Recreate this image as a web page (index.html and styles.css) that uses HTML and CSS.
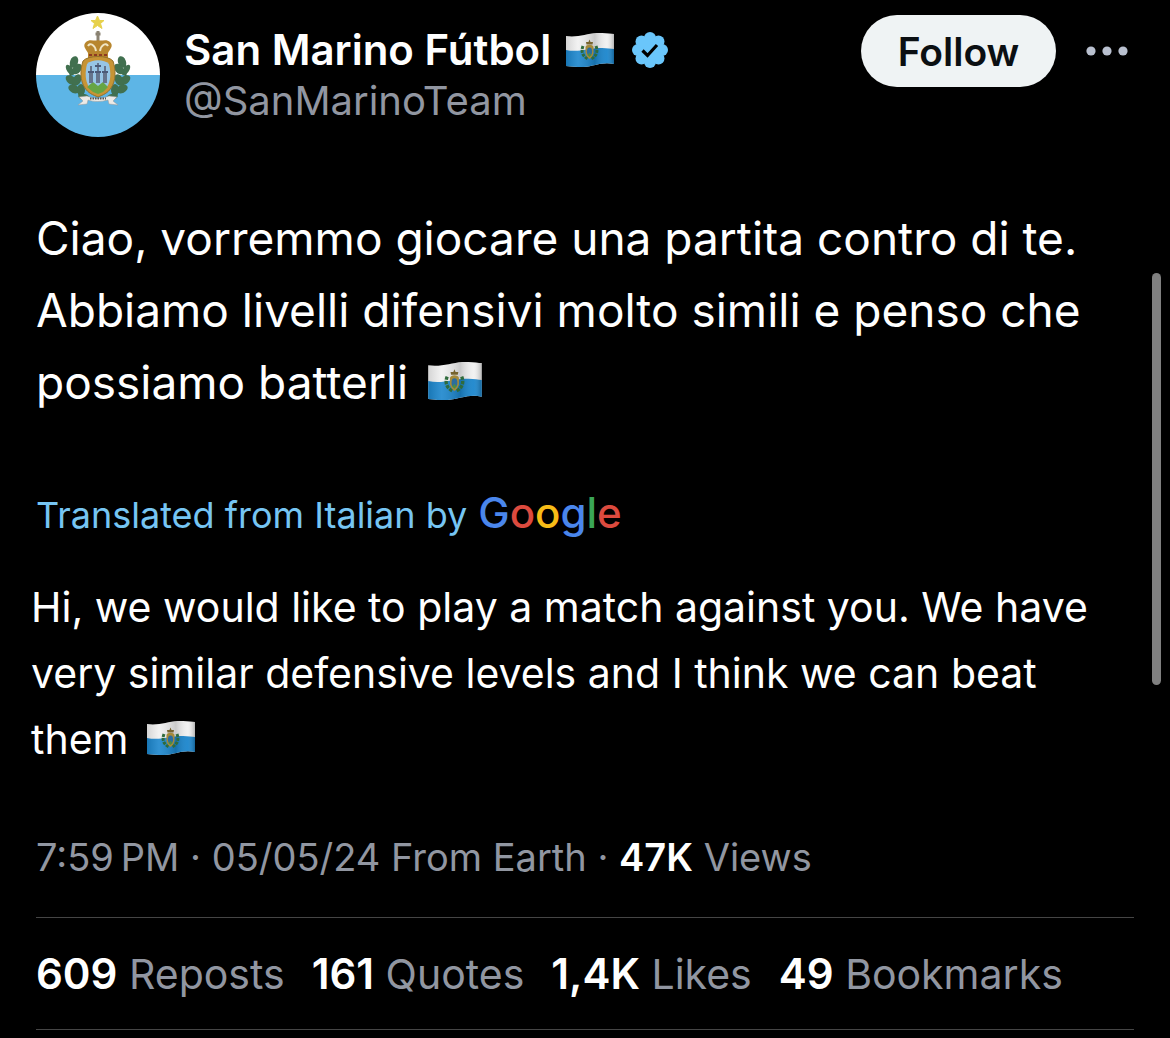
FILE: index.html
```html
<!DOCTYPE html>
<html lang="en">
<head>
    <meta charset="UTF-8">
    <meta name="viewport" content="width=device-width, initial-scale=1.0">
    <title>San Marino Fútbol</title>
    <link rel="stylesheet" href="styles.css">
</head>
<body>
    <!-- shared flag, used in the name and in both texts -->
    <svg class="defs" width="0" height="0" aria-hidden="true">
        <defs>
            <linearGradient id="wave" x1="0" x2="1" y1="0" y2="0">
                <stop offset="0" stop-color="#000" stop-opacity=".12"/>
                <stop offset=".25" stop-color="#fff" stop-opacity=".1"/>
                <stop offset=".6" stop-color="#000" stop-opacity=".16"/>
                <stop offset=".85" stop-color="#fff" stop-opacity=".05"/>
                <stop offset="1" stop-color="#000" stop-opacity=".25"/>
            </linearGradient>
            <symbol id="flag" viewBox="0 0 48 34">
                <path d="M0 3 C14 5 24 -1 36 0 C41 0 45 1 48 1 V31 C34 28 26 35 12 34 C7 34 3 33 0 33Z" fill="#f1f1f1"/>
                <path d="M0 17 C14 20 24 14 36 15 C41 15 45 16 48 16 V31 C34 28 26 35 12 34 C7 34 3 33 0 33Z" fill="#1b86cd"/>
                <path d="M0 3 C14 5 24 -1 36 0 C41 0 45 1 48 1 V31 C34 28 26 35 12 34 C7 34 3 33 0 33Z" fill="url(#wave)"/>
                <path d="M17 13 C15 18 16 23 22 26 M30 13 C32 18 31 23 25 26" fill="none" stroke="#2f6b3c" stroke-width="3" stroke-dasharray="3 1"/>
                <path d="M19.500 14 C20 11 27 11 27.500 14 V20 C27 23 25 25 23.500 26 C22 25 20 23 19.500 20Z" fill="#a58a3a"/>
                <ellipse cx="23.500" cy="18.500" rx="2.600" ry="4" fill="#2c6d9e"/>
                <path d="M21.500 22 L23.500 19.500 L25.500 22 L23.500 24Z" fill="#4c8b45"/>
                <path d="M20.500 11.500 L20 9 L22.500 9 L23.500 6.500 L24.500 9 L27 9 L26.500 11.500Z" fill="#77642f"/>
            </symbol>
        </defs>
    </svg>

    <article class="post">
        <header class="header">
            <svg class="avatar" viewBox="0 0 124 124" role="img" aria-label="San Marino">
                <defs>
                    <clipPath id="circle"><circle cx="62" cy="62" r="62"/></clipPath>
                </defs>
                <g clip-path="url(#circle)">
                    <rect width="124" height="62" fill="#fff"/>
                    <rect y="62" width="124" height="62" fill="#5db5e6"/>
                </g>
                <path d="M61.500 3 L63.500 7.500 L68 7.500 L64.500 10.500 L66 15.500 L61.500 12.500 L57 15.500 L58.500 10.500 L55 7.500 L59.500 7.500Z" fill="#e7d14c" stroke="#e7d14c"/>
                <path d="M37 45 C31 62 34 80 56 87 M87 45 C93 62 90 80 68 87" fill="none" stroke="#3f6748" stroke-width="2"/>
                <g fill="#41704f">
                    <ellipse cx="38" cy="49" rx="4" ry="6" transform="rotate(20 38 49)"/>
                    <ellipse cx="34" cy="57" rx="3" ry="6" transform="rotate(-35 34 57)"/>
                    <ellipse cx="41" cy="56" rx="4" ry="6" transform="rotate(38 41 56)"/>
                    <ellipse cx="35" cy="67" rx="4" ry="6" transform="rotate(-52 35 67)"/>
                    <ellipse cx="41" cy="67" rx="4" ry="6" transform="rotate(25 41 67)"/>
                    <ellipse cx="38" cy="76" rx="4" ry="6" transform="rotate(-65 38 76)"/>
                    <ellipse cx="45" cy="77" rx="4" ry="6"/>
                    <ellipse cx="48" cy="84" rx="3" ry="6" transform="rotate(-75 48 84)"/>
                    <ellipse cx="86" cy="49" rx="4" ry="6" transform="rotate(-20 86 49)"/>
                    <ellipse cx="90" cy="57" rx="3" ry="6" transform="rotate(35 90 57)"/>
                    <ellipse cx="83" cy="56" rx="4" ry="6" transform="rotate(-38 83 56)"/>
                    <ellipse cx="89" cy="67" rx="4" ry="6" transform="rotate(52 89 67)"/>
                    <ellipse cx="83" cy="67" rx="4" ry="6" transform="rotate(-25 83 67)"/>
                    <ellipse cx="86" cy="76" rx="4" ry="6" transform="rotate(65 86 76)"/>
                    <ellipse cx="79" cy="77" rx="4" ry="6"/>
                    <ellipse cx="76" cy="84" rx="3" ry="6" transform="rotate(75 76 84)"/>
                </g>
                <path d="M62 18 V28 M59.500 21 H64.500" stroke="#8a8272" stroke-width="3"/>
                <path d="M50 29 C54 25 59 29 62 27 C65 29 70 25 74 29 C78 33 74 36 72 40 V45 H52 V40 C50 36 46 33 50 29Z" fill="#b8862e"/>
                <path d="M52 33 C54 29 59 32 60 38 M72 33 C70 29 65 32 64 38" fill="none" stroke="#f1e6c4" stroke-width="2"/>
                <path d="M53 42 H71" stroke="#8d3a21" stroke-width="2" stroke-dasharray="3 2"/>
                <path d="M47 48 C52 42 72 42 77 48 C80 57 80 68 75 75 C72 80 67 82 62 84 C57 82 52 80 49 75 C44 68 44 57 47 48Z" fill="#c79435" stroke="#94712b"/>
                <path d="M51 51 C56 46 68 46 73 51 C75 59 75 68 71 74 C68 78 65 79 62 80 C59 79 56 78 53 74 C49 68 49 59 51 51Z" fill="#97c5e6"/>
                <path d="M51 74 L57 69 L62 73 L67 69 L72 74 L67 79 L62 81 L57 79Z" fill="#66a544"/>
                <g fill="#65748c">
                    <path d="M53 59 H57 V70 H53Z M60 59 H64 V70 H60Z M67 59 H71 V70 H67Z"/>
                    <path d="M54 53 H56 V58 H54Z M61 50 H63 V58 H61Z M68 53 H70 V58 H68Z"/>
                </g>
                <path d="M52 59 H58 M59 59 H65 M66 59 H72 M59 53 H65" stroke="#4b5a79" stroke-width="2"/>
                <path d="M43 84 L51 83 C58 86 66 86 73 83 L81 84 L77 88 L82 92 L73 91 L72 87 C65 89 58 89 52 87 L51 91 L42 92 L47 88Z" fill="#eceae6" stroke="#999" stroke-width=".5"/>
                <path d="M54 85.500 H70" stroke="#555" stroke-width="2" stroke-dasharray="1.500 1"/>
            </svg>
            <div class="author">
                <div class="name">
                    <span>San Marino Fútbol</span>
                    <svg class="flag" role="img" aria-label="Flag"><use href="#flag"/></svg>
                    <svg class="verified" viewBox="0 0 36 36" role="img" aria-label="Verified">
                        <g fill="#6ac6fb">
                            <circle cx="18" cy="18" r="14"/>
                            <circle cx="18" cy="6" r="6"/>
                            <circle cx="26.500" cy="9.500" r="6"/>
                            <circle cx="30" cy="18" r="6"/>
                            <circle cx="26.500" cy="26.500" r="6"/>
                            <circle cx="18" cy="30" r="6"/>
                            <circle cx="9.500" cy="26.500" r="6"/>
                            <circle cx="6" cy="18" r="6"/>
                            <circle cx="9.500" cy="9.500" r="6"/>
                        </g>
                        <path d="M10.500 18.500 L15.500 23.500 L25 13" fill="none" stroke="#000" stroke-width="3.200"/>
                    </svg>
                </div>
                <a class="handle" href="#">@SanMarinoTeam</a>
            </div>
            <button class="follow" type="button">Follow</button>
            <button class="more" type="button" aria-label="More">
                <svg viewBox="0 0 42 10" fill="#b9c0cf">
                    <circle cx="5" cy="5" r="4.600"/>
                    <circle cx="21" cy="5" r="4.600"/>
                    <circle cx="37" cy="5" r="4.600"/>
                </svg>
            </button>
        </header>

        <p class="text" lang="it">Ciao, vorremmo giocare una partita contro di te. Abbiamo livelli difensivi molto simili e penso che possiamo batterli <svg class="flag big" role="img" aria-label="Flag"><use href="#flag"/></svg></p>

        <a class="source" href="#">
            <span>Translated from Italian by</span>
            <span class="google"><span class="blue">G</span><span class="red">o</span><span class="yellow">o</span><span class="blue">g</span><span class="green">l</span><span class="red">e</span></span>
        </a>

        <p class="translation">Hi, we would like to play a match against you. We have very similar defensive levels and I think we can beat them <svg class="flag" role="img" aria-label="Flag"><use href="#flag"/></svg></p>

        <div class="meta">7:59&#8239;PM · 05/05/24 From Earth · <b>47K</b> Views</div>

        <div class="stats">
            <a href="#"><b>609</b> Reposts</a>
            <a href="#"><b>161</b> Quotes</a>
            <a href="#"><b>1,4K</b> Likes</a>
            <a href="#"><b>49</b> Bookmarks</a>
        </div>
    </article>
    <div class="scrollbar"></div>
</body>
</html>
```
FILE: styles.css
```css
body {
    margin: 0;
    background-color: #000;
    color: #fff;
    font-family: Inter, "Liberation Sans", sans-serif;
}
a {
    color: inherit;
    text-decoration: none;
}
p {
    margin: 0;
}
b {
    color: #fff;
    font-weight: 600;
}
.defs {
    position: absolute;
}
.post {
    padding: 13px 36px 8px;
}
.header {
    display: flex;
    align-items: flex-start;
}
.avatar {
    width: 124px;
    height: 124px;
    margin-right: 24px;
    flex-shrink: 0;
}
.author {
    flex-grow: 1;
    padding-top: 11px;
}
.name {
    display: flex;
    align-items: center;
    font-size: 42px;
    line-height: 52px;
    font-weight: 600;
}
.flag {
    width: 48px;
    height: 34px;
}
.name .flag {
    margin: 0 18px 0 15px;
}
.flag.big {
    width: 54px;
    height: 38px;
}
.text .flag, .translation .flag {
    margin-left: 7px;
    vertical-align: -1px;
}
.verified {
    width: 36px;
    height: 36px;
}
.handle {
    display: block;
    font-size: 40px;
    line-height: 50px;
    color: #9196a1;
}
.follow {
    width: 195px;
    height: 72px;
    margin-top: 2px;
    border: none;
    border-radius: 36px;
    background-color: #eff3f4;
    color: #0b0f12;
    font-family: inherit;
    font-size: 39px;
    font-weight: 600;
    cursor: pointer;
}
.more {
    display: flex;
    align-items: center;
    width: 42px;
    height: 72px;
    margin: 2px 6px 0 30px;
    padding: 0;
    border: none;
    background: none;
    cursor: pointer;
}
.more svg {
    width: 42px;
    height: 10px;
}
.text {
    margin-top: 65px;
    font-size: 46px;
    line-height: 72px;
}
.source {
    display: flex;
    align-items: baseline;
    margin-top: 65px;
    font-size: 36px;
    line-height: 60px;
    color: #76c5f3;
}
.google {
    margin-left: 11px;
    font-size: 42px;
    font-weight: 500;
}
.blue {
    color: #4a86ec;
}
.red {
    color: #dc4a3e;
}
.yellow {
    color: #f7bc17;
}
.green {
    color: #3aa657;
}
.translation {
    margin: 29px 20px 0 -5px;
    font-size: 41px;
    line-height: 66px;
}
.meta {
    padding: 57px 0 32px;
    border-bottom: 1px solid #454545;
    font-size: 38px;
    line-height: 56px;
    color: #9196a1;
}
.stats {
    display: flex;
    gap: 27px;
    padding: 28px 0 27px;
    border-bottom: 1px solid #454545;
    font-size: 41px;
    line-height: 56px;
    color: #9196a1;
}
.stats b {
    font-size: 42px;
}
.scrollbar {
    position: fixed;
    top: 273px;
    right: 9px;
    width: 9px;
    height: 412px;
    border-radius: 5px;
    background-color: #808080;
}
```
